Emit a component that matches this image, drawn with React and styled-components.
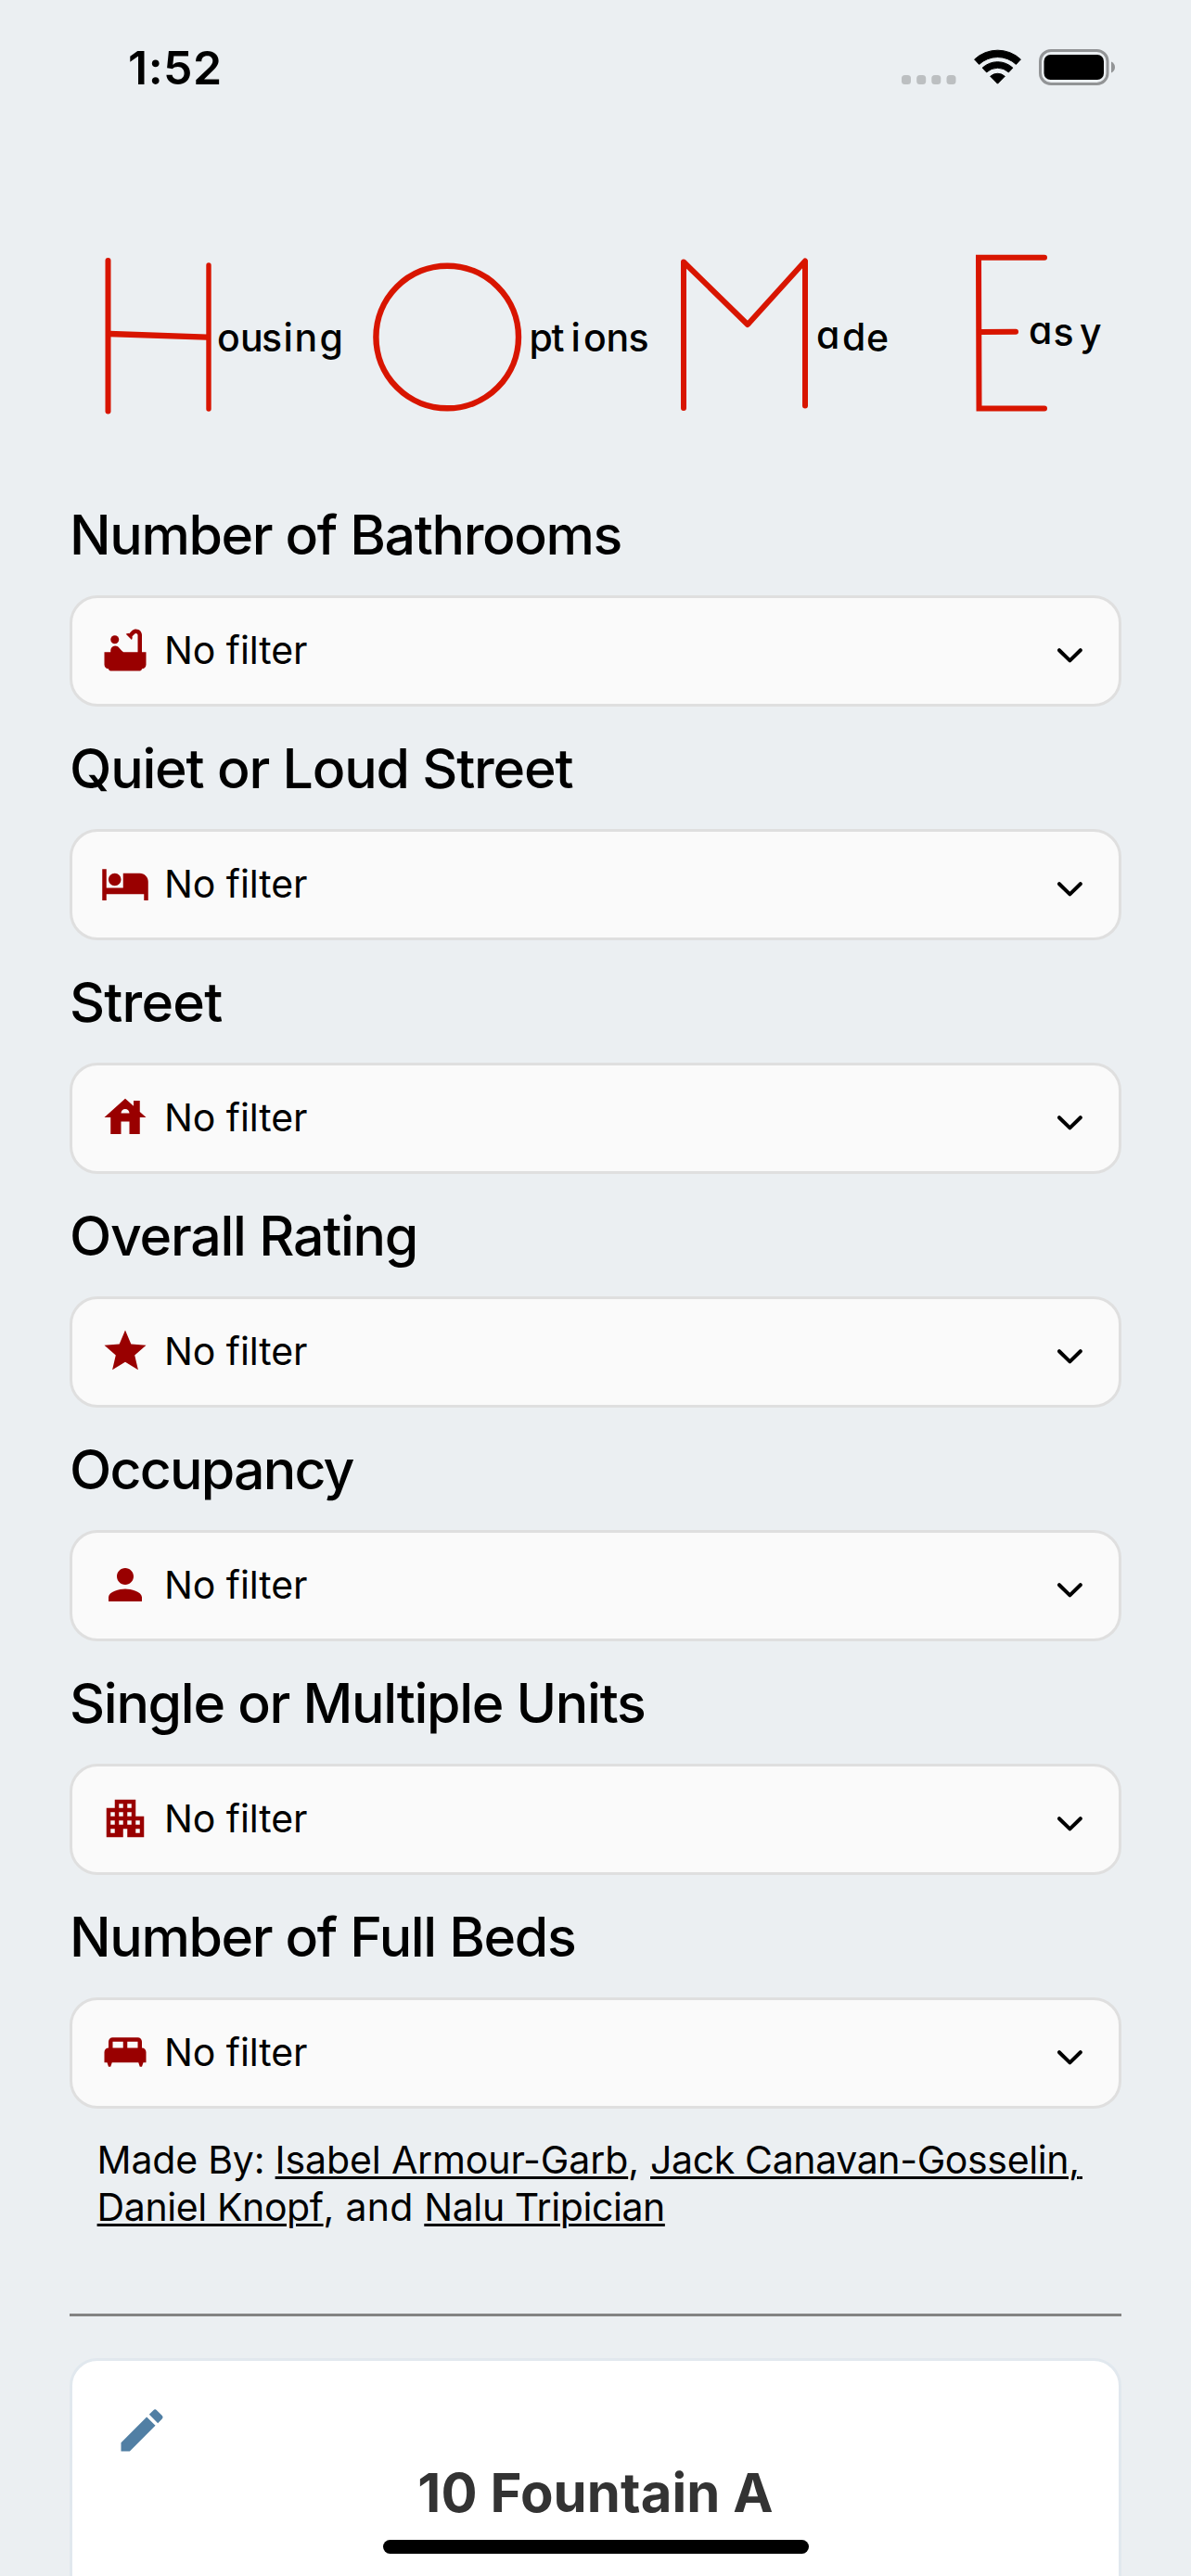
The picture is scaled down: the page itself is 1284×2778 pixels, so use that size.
import React from 'react';
import styled, { createGlobalStyle } from 'styled-components';
import {
  MdApartment,
  MdBathtub,
  MdEdit,
  MdHotel,
  MdHouse,
  MdKingBed,
  MdPerson,
  MdStar,
} from 'react-icons/md';

const GlobalStyle = createGlobalStyle`
  * { box-sizing: border-box; }
  body {
    margin: 0;
    background: #ebeff2;
  }
`;

const Screen = styled.div`
  position: relative;
  width: 1284px;
  height: 2778px;
  overflow: hidden;
  display: flex;
  flex-direction: column;
  background: #ebeff2;
  color: #000;
  font-family: Inter, "Liberation Sans", sans-serif;
`;

const StatusBar = styled.header`
  flex: none;
  height: 146px;
  padding: 0 82px 0 138px;
  display: flex;
  align-items: center;
  justify-content: space-between;
`;

const Time = styled.time`
  font-size: 50px;
  font-weight: 600;
  letter-spacing: 0.5px;
`;

const StatusIcons = styled.div`
  display: flex;
  align-items: center;
  gap: 19px;

  svg {
    display: block;
  }
`;

const Content = styled.main`
  flex: none;
  padding: 0 75px;
  display: flex;
  flex-direction: column;
`;

const Logo = styled.svg`
  display: block;
  width: 1134px;
  height: 364px;
`;

const LogoText = styled.text`
  font-family: Inter, "Liberation Sans", sans-serif;
  font-size: 41px;
  font-weight: 500;
  font-feature-settings: "cv11";
  fill: #000;
`;

const FilterGroup = styled.section`
  display: flex;
  flex-direction: column;
`;

const FilterTitle = styled.h2`
  margin: 0;
  height: 132px;
  line-height: 134px;
  font-size: 59px;
  font-weight: 500;
  letter-spacing: ${(p) => p.$tracking}px;
  white-space: nowrap;
`;

const Select = styled.button`
  height: 120px;
  padding: 0 39px 2px 30px;
  display: flex;
  align-items: center;
  gap: 15px;
  border: 3px solid #dfdfdf;
  border-radius: 30px;
  background: #fafafa;
  color: #000;
  font: inherit;
  text-align: left;
`;

const FilterIcon = styled.span`
  display: flex;
  font-size: 54px;
  color: #990000;
`;

const SelectValue = styled.span`
  flex: 1;
  font-size: 41px;
  letter-spacing: -0.07px;
`;

const Chevron = styled.svg`
  display: block;
  width: 27px;
  height: 16px;
  margin-top: 12px;
`;

const Credits = styled.p`
  margin: 30px 0 0;
  padding-left: 29.6px;
  font-size: 41px;
  line-height: 51px;
  letter-spacing: -0.2px;
  white-space: nowrap;
`;

const CreditJoin = styled.span`
  letter-spacing: 0.25px;
`;

const CreditLink = styled.a`
  letter-spacing: ${(p) => p.$tracking}px;
  text-decoration: underline;
  text-decoration-thickness: 3px;
  text-underline-offset: 3px;
`;

const Divider = styled.hr`
  width: 100%;
  height: 3px;
  margin: 89px 0 45px;
  border: 0;
  background: #838383;
`;

const ListingCard = styled.article`
  height: 300px;
  padding: 45px;
  display: flex;
  flex-direction: column;
  gap: 2px;
  border: 3px solid #e1e8ee;
  border-radius: 30px;
  background: #fff;
`;

const EditButton = styled.span`
  display: flex;
  font-size: 60px;
  color: #517fa4;
`;

const ListingTitle = styled.h3`
  margin: 0;
  line-height: 70px;
  font-size: 58px;
  font-weight: 700;
  letter-spacing: 0.1px;
  text-align: center;
  color: #333;
`;

const HomeIndicator = styled.div`
  position: absolute;
  left: 413px;
  bottom: 24px;
  width: 459px;
  height: 15px;
  border-radius: 8px;
  background: #000;
`;

const FILTERS = [
  { title: 'Number of Bathrooms', tracking: -1.37, icon: MdBathtub },
  { title: 'Quiet or Loud Street', tracking: -1.2, icon: MdHotel },
  { title: 'Street', tracking: -0.8, icon: MdHouse },
  { title: 'Overall Rating', tracking: -1.25, icon: MdStar },
  { title: 'Occupancy', tracking: -1.78, icon: MdPerson },
  { title: 'Single or Multiple Units', tracking: -1.3, icon: MdApartment },
  { title: 'Number of Full Beds', tracking: -1.37, icon: MdKingBed },
];

function CellularDots() {
  return (
    <svg width="59" height="40" viewBox="0 0 59 40" fill="#bcbfc1">
      <rect x="0" y="28" width="10" height="10" rx="3.5" />
      <rect x="16.2" y="28" width="10" height="10" rx="3.5" />
      <rect x="32.3" y="28" width="10" height="10" rx="3.5" />
      <rect x="48.5" y="28" width="10" height="10" rx="3.5" />
    </svg>
  );
}

function WifiIcon() {
  return (
    <svg width="51" height="40" viewBox="0 -0.7 51 40" stroke="#000" strokeLinejoin="round">
      <path d="M.6 10.3A36.5 36.5 0 0 1 50.4 10.3L45.4 15.7A29.2 29.2 0 0 0 5.6 15.7Z" />
      <path d="M9.1 19.5A24 24 0 0 1 41.9 19.5L37.4 24.2A17.5 17.5 0 0 0 13.6 24.2Z" />
      <path d="M17.7 28.6A11.5 11.5 0 0 1 33.3 28.6L25.5 36.5Z" />
    </svg>
  );
}

function BatteryIcon() {
  return (
    <svg width="82" height="40" viewBox="0 0 82 40">
      <rect x="1.5" y="1.5" width="72.5" height="36" rx="11.5" fill="none" stroke="#929496" strokeWidth="3" />
      <rect x="5.5" y="6" width="64.5" height="27" rx="7" />
      <path d="M78 13.5c2.6 1 4 3.4 4 6s-1.4 5-4 6z" fill="#929496" />
    </svg>
  );
}

function HomeLogo() {
  return (
    <Logo viewBox="75 146 1134 364" role="img" aria-label="Housing Options Made Easy">
      <g fill="none" stroke="#d81500" strokeWidth="6" strokeLinecap="round" strokeLinejoin="round">
        <line x1="116.5" y1="281" x2="116.5" y2="443.5" />
        <line x1="225" y1="286" x2="225" y2="441" strokeWidth="5.4" />
        <line x1="118" y1="360" x2="223" y2="363.6" strokeWidth="6.4" />
        <circle cx="482.2" cy="363.5" r="76.8" strokeWidth="6.4" />
        <polyline points="737,440 737,282.5 806,350 868,281.5 868,437.5" />
        <polyline points="1126,440.5 1055.5,440.5 1055,277.8 1126,277.8" strokeLinejoin="miter" />
        <line x1="1057" y1="358" x2="1095" y2="357.8" />
      </g>
      <LogoText x="234 259 282 305.5 317.5 344.5" y="378.5">ousing</LogoText>
      <LogoText x="570.5 594.5 615.5 629 653.5 677.5" y="379">ptions</LogoText>
      <LogoText x="880 908 934" y="376 377.5 379">ade</LogoText>
      <LogoText x="1109 1135.5 1164" y="371 373 373">asy</LogoText>
    </Logo>
  );
}

function FilterSelect({ title, tracking, icon: Icon }) {
  return (
    <FilterGroup>
      <FilterTitle $tracking={tracking}>{title}</FilterTitle>
      <Select type="button">
        <FilterIcon>
          <Icon />
        </FilterIcon>
        <SelectValue>No filter</SelectValue>
        <Chevron viewBox="0 0 27 16">
          <path
            d="M2 2.2L13.4 13.4L24.8 2.2"
            fill="none"
            stroke="#000"
            strokeWidth="4"
            strokeLinecap="round"
            strokeLinejoin="round"
          />
        </Chevron>
      </Select>
    </FilterGroup>
  );
}

export default function App() {
  return (
    <>
      <GlobalStyle />
      <Screen>
        <StatusBar>
          <Time>1:52</Time>
          <StatusIcons>
            <CellularDots />
            <WifiIcon />
            <BatteryIcon />
          </StatusIcons>
        </StatusBar>
        <Content>
          <HomeLogo />
          {FILTERS.map((filter) => (
            <FilterSelect key={filter.title} {...filter} />
          ))}
          <Credits>
            Made By: <CreditLink $tracking={-0.12}>Isabel Armour-Garb</CreditLink>
            <CreditJoin>, </CreditJoin>
            <CreditLink $tracking={-0.37}>Jack Canavan-Gosselin,{'\u200a'}</CreditLink>
            <br />
            <CreditLink $tracking={-0.4}>Daniel Knopf</CreditLink>
            <CreditJoin>, and </CreditJoin>
            <CreditLink $tracking={-0.42}>Nalu Tripician</CreditLink>
          </Credits>
          <Divider />
          <ListingCard>
            <EditButton>
              <MdEdit />
            </EditButton>
            <ListingTitle>10 Fountain A</ListingTitle>
          </ListingCard>
        </Content>
        <HomeIndicator />
      </Screen>
    </>
  );
}
